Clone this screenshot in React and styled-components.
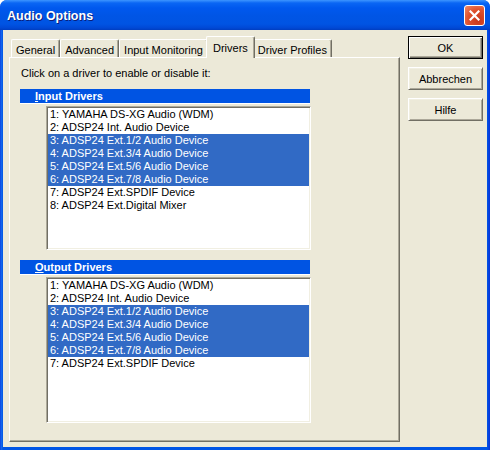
import React from 'react';
import styled, { createGlobalStyle } from 'styled-components';

const GlobalStyle = createGlobalStyle`
    html, body { margin: 0; padding: 0; background: #ffffff; }
    body { font-family: "Liberation Sans", Arial, sans-serif; font-size: 11px; }
`;

const inputDrivers = [
    '1: YAMAHA DS-XG Audio (WDM)',
    '2: ADSP24 Int. Audio Device',
    '3: ADSP24 Ext.1/2 Audio Device',
    '4: ADSP24 Ext.3/4 Audio Device',
    '5: ADSP24 Ext.5/6 Audio Device',
    '6: ADSP24 Ext.7/8 Audio Device',
    '7: ADSP24 Ext.SPDIF Device',
    '8: ADSP24 Ext.Digital Mixer',
];

const outputDrivers = inputDrivers.slice(0, 7);
const enabled = [2, 3, 4, 5];

const tabs = ['General', 'Advanced', 'Input Monitoring', 'Drivers', 'Driver Profiles'];

export default function App() {
    return (
        <Window>
            <GlobalStyle />
            <TitleBar>
                <Title>Audio Options</Title>
                <CloseButton>
                    <svg width="11" height="11" viewBox="0 0 11 11">
                        <path d="M1.5 1.5 L9.5 9.5 M9.5 1.5 L1.5 9.5" stroke="#fff" strokeWidth="2.2" strokeLinecap="square" />
                    </svg>
                </CloseButton>
            </TitleBar>

            <Body>
                <TabArea>
                    <TabStrip>
                        {tabs.map(t => (
                            <Tab key={t} active={t === 'Drivers'}>{t}</Tab>
                        ))}
                    </TabStrip>
                    <Panel>
                        <Hint>Click on a driver to enable or disable it:</Hint>

                        <SectionHeader><u>I</u>nput Drivers</SectionHeader>
                        <ListBox height={144}>
                            {inputDrivers.map((d, i) => (
                                <Item key={d} selected={enabled.includes(i)}>{d}</Item>
                            ))}
                        </ListBox>

                        <SectionHeader top={10}><u>O</u>utput Drivers</SectionHeader>
                        <ListBox height={146}>
                            {outputDrivers.map((d, i) => (
                                <Item key={d} selected={enabled.includes(i)}>{d}</Item>
                            ))}
                        </ListBox>
                    </Panel>
                </TabArea>

                <ButtonColumn>
                    <Button primary>OK</Button>
                    <Button>Abbrechen</Button>
                    <Button>Hilfe</Button>
                </ButtonColumn>
            </Body>
        </Window>
    );
}

const Window = styled.div`
    width: 490px;
    height: 450px;
    box-sizing: border-box;
    display: flex;
    flex-direction: column;
    background: linear-gradient(to right, #0831d9 0px, #166aee 1px, #0055e5 3px, #0055e5 487px, #0831d9 490px);
    border-radius: 7px 7px 0 0;
    overflow: hidden;
`;

const TitleBar = styled.div`
    height: 30px;
    flex: none;
    display: flex;
    align-items: center;
    justify-content: space-between;
    padding: 0 5px 0 7px;
    background: linear-gradient(to bottom,
        #3d95ff 0px, #0a66f4 3px, #0058ee 8px, #0055e5 16px,
        #0054e3 24px, #0048d5 28px, #003dc0 30px);
`;

const Title = styled.span`
    color: #ffffff;
    font-family: "Liberation Sans", Arial, sans-serif;
    font-weight: bold;
    font-size: 12.5px;
    text-shadow: 1px 1px 0 #0a1e79;
    margin-top: 1px;
`;

const CloseButton = styled.div`
    width: 21px;
    height: 21px;
    box-sizing: border-box;
    border: 1px solid #ffffff;
    border-radius: 3px;
    background: radial-gradient(circle at 70% 75%, #c8371a 0%, #e0522e 55%, #f08c6a 100%);
    display: flex;
    align-items: center;
    justify-content: center;
    margin-top: 1px;
`;

const Body = styled.div`
    flex: 1;
    margin: 0 3px 3px 3px;
    background: #ece9d8;
    display: flex;
    gap: 8px;
    padding: 6px 4px 5px 6px;
`;

const TabArea = styled.div`
    width: 392px;
    display: flex;
    flex-direction: column;
`;

const TabStrip = styled.div`
    display: flex;
    align-items: flex-end;
    padding-left: 2px;
    height: 21px;
    position: relative;
    z-index: 1;
`;

const Tab = styled.div`
    height: ${p => (p.active ? '22px' : '18px')};
    margin: ${p => (p.active ? '0 -2px 0 -2px' : '0')};
    padding: ${p => (p.active ? '0 6px' : '0 4px')};
    box-sizing: border-box;
    display: flex;
    align-items: center;
    padding-top: ${p => (p.active ? '0' : '2px')};
    color: #000000;
    background: #ece9d8;
    border-top: 1px solid #ffffff;
    border-left: 1px solid #ffffff;
    border-right: 1px solid #716f64;
    box-shadow: inset -1px 0 0 #aca899;
    border-radius: 2px 2px 0 0;
    white-space: nowrap;
    position: relative;
    z-index: ${p => (p.active ? 2 : 0)};
    top: ${p => (p.active ? '1px' : '0')};
`;

const Panel = styled.div`
    flex: 1;
    box-sizing: border-box;
    border-top: 1px solid #ffffff;
    border-left: 1px solid #ffffff;
    border-right: 1px solid #716f64;
    border-bottom: 1px solid #716f64;
    box-shadow: inset -1px -1px 0 #aca899;
    padding: 9px 0 0 10px;
    display: flex;
    flex-direction: column;
`;

const Hint = styled.div`
    height: 13px;
    line-height: 13px;
    margin-bottom: 9px;
    padding-left: 1px;
`;

const SectionHeader = styled.div`
    width: 275px;
    height: 14px;
    line-height: 14px;
    margin-top: ${p => p.top || 0}px;
    background: #0054e3;
    color: #ffffff;
    font-weight: bold;
    padding-left: 15px;
    border-bottom: 1px solid #ffffff;
`;

const ListBox = styled.div`
    margin: 2px 0 0 26px;
    width: 265px;
    height: ${p => p.height}px;
    box-sizing: border-box;
    background: #ffffff;
    border-top: 1px solid #aca899;
    border-left: 1px solid #aca899;
    border-right: 1px solid #ffffff;
    border-bottom: 1px solid #ffffff;
    box-shadow: inset 1px 1px 0 #716f64, inset -1px -1px 0 #f1efe2;
    padding: 1px;
    overflow: hidden;
`;

const Item = styled.div`
    height: 13px;
    line-height: 13px;
    padding-left: 2px;
    white-space: nowrap;
    background: ${p => (p.selected ? '#316ac5' : 'transparent')};
    color: ${p => (p.selected ? '#ffffff' : '#000000')};
`;

const ButtonColumn = styled.div`
    display: flex;
    flex-direction: column;
    gap: 8px;
`;

const Button = styled.div`
    width: 75px;
    height: 23px;
    box-sizing: border-box;
    display: flex;
    align-items: center;
    justify-content: center;
    background: #ece9d8;
    color: #000000;
    border: 1px solid;
    border-color: ${p => (p.primary
        ? '#000000'
        : '#ffffff #716f64 #716f64 #ffffff')};
    box-shadow: ${p => (p.primary
        ? 'inset 1px 1px 0 #ffffff, inset -1px -1px 0 #716f64, inset -2px -2px 0 #aca899'
        : 'inset 1px 1px 0 #f1efe2, inset -1px -1px 0 #aca899')};
`;
